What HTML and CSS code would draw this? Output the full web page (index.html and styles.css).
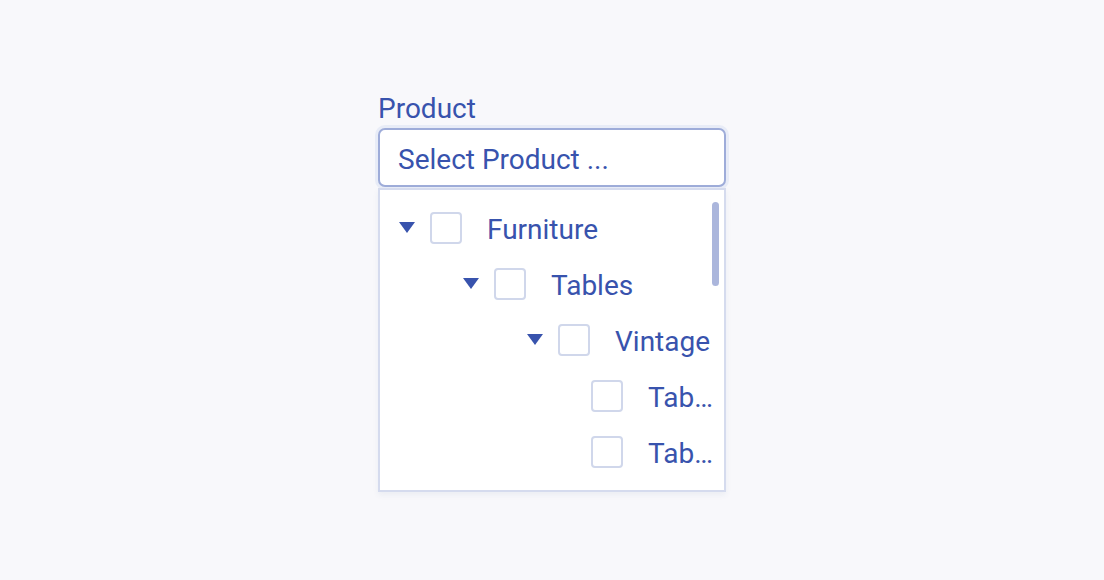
FILE: index.html
```html
<!DOCTYPE html>
<html>
<head>
<meta charset="utf-8">
<link rel="stylesheet" href="styles.css">
</head>
<body>
<div class="field">
  <label class="label">Product</label>
  <div class="input">Select Product ...</div>
  <div class="dropdown">
    <ul class="tree">
      <li class="node lvl-0"><span class="toggle"></span><span class="check"></span><span class="text">Furniture</span></li>
      <li class="node lvl-1"><span class="toggle"></span><span class="check"></span><span class="text">Tables</span></li>
      <li class="node lvl-2"><span class="toggle"></span><span class="check"></span><span class="text">Vintage</span></li>
      <li class="node lvl-3 leaf"><span class="check"></span><span class="text">Table Oak</span></li>
      <li class="node lvl-3 leaf"><span class="check"></span><span class="text">Table Walnut</span></li>
    </ul>
    <div class="thumb"></div>
  </div>
</div>
</body>
</html>
```

FILE: styles.css
```css
* { box-sizing: border-box; }
html, body { margin: 0; padding: 0; }
body {
  background: #f8f8fb;
  font-family: Roboto, "Liberation Sans", sans-serif;
  color: #3853ad;
  width: 1104px;
  height: 580px;
  overflow: hidden;
}
.field {
  width: 348px;
  margin: 93px auto 0;
  display: flex;
  flex-direction: column;
}
.label {
  font-size: 28px;
  line-height: 32px;
  height: 32px;
}
.input {
  margin-top: 3px;
  height: 59px;
  border: 2px solid #9eacd9;
  border-radius: 7px;
  background: #fff;
  box-shadow: 0 0 0 3px #e8ecf7;
  font-size: 28px;
  line-height: 51px;
  padding: 4px 0 0 18px;
}
.dropdown {
  position: relative;
  margin-top: 1px;
  height: 304px;
  border: 2px solid #d5dbee;
  background: #fff;
  box-shadow: 0 3px 6px rgba(40, 60, 120, 0.06);
  overflow: hidden;
}
.tree {
  list-style: none;
  margin: 0;
  padding: 10px 10px 0 19px;
}
.node {
  height: 56px;
  display: flex;
  align-items: center;
  white-space: nowrap;
  font-size: 28px;
}
.lvl-1 { padding-left: 64px; }
.lvl-2 { padding-left: 128px; }
.lvl-3 { padding-left: 192px; }
.toggle {
  flex: none;
  width: 0;
  height: 0;
  border-left: 8px solid transparent;
  border-right: 8px solid transparent;
  border-top: 11px solid #3853ad;
  margin-right: 15px;
  margin-top: -1px;
}
.check {
  flex: none;
  width: 32px;
  height: 32px;
  border: 2px solid #d0d7eb;
  border-radius: 4px;
  margin-right: 25px;
}
.text {
  flex: 1 1 auto;
  min-width: 0;
  overflow: hidden;
  text-overflow: ellipsis;
  line-height: 32px;
  padding-top: 3px;
}
.thumb {
  position: absolute;
  top: 12px;
  right: 5px;
  width: 7px;
  height: 84px;
  border-radius: 4px;
  background: #abb6dc;
}
```
